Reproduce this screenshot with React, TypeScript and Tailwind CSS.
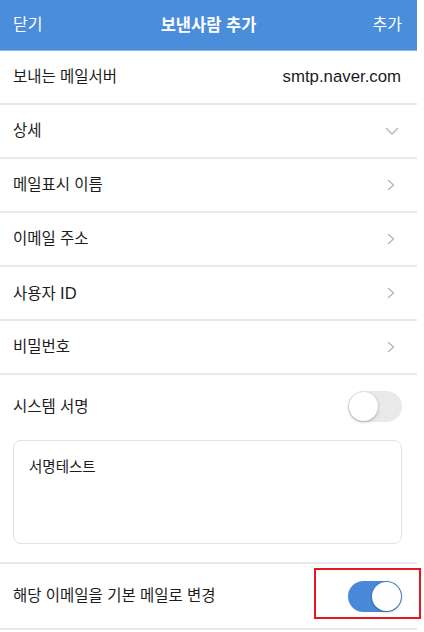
import React from "react";

const font = { fontFamily: '"Liberation Sans", "Noto Sans CJK KR", sans-serif' };

function ChevronRight() {
  return (
    <svg width="8" height="12" viewBox="0 0 8 12" fill="none">
      <path d="M1.5 1.5 L6.5 6 L1.5 10.5" stroke="#b4b4b4" strokeWidth="1.3" strokeLinecap="round" strokeLinejoin="round" />
    </svg>
  );
}

function ChevronDown() {
  return (
    <svg width="14" height="9" viewBox="0 0 14 9" fill="none">
      <path d="M1.5 1.5 L7 7 L12.5 1.5" stroke="#b4b4b4" strokeWidth="1.3" strokeLinecap="round" strokeLinejoin="round" />
    </svg>
  );
}

function Toggle({ on }: { on: boolean }) {
  return (
    <div
      className={
        "w-[54px] h-[31px] rounded-full flex items-center px-[1px] " +
        (on ? "bg-[#4a89d9] justify-end" : "bg-[#e9e9e9] justify-start")
      }
    >
      <div className="w-[29px] h-[29px] rounded-full bg-white shadow-[0_1px_3px_rgba(0,0,0,0.3)]" />
    </div>
  );
}

function Row({ label, right }: { label: React.ReactNode; right?: React.ReactNode }) {
  return (
    <div className="h-[54px] border-b-2 border-[#e8e8e8] flex items-center justify-between pl-[13px] pr-[22px]">
      <span className="text-[15.5px] text-[#1c1c1c]">{label}</span>
      {right}
    </div>
  );
}

export default function App() {
  return (
    <div className="w-[424px] h-[632px] bg-white overflow-hidden relative" style={font}>
      <div className="w-[417px]">
        <div className="h-[51px] bg-[#4a8ddb] border-b border-[#8db8ea] flex items-center justify-between px-[13px] text-white">
          <span className="text-[16px] w-[60px]">닫기</span>
          <span className="text-[16.5px] font-semibold">보낸사람 추가</span>
          <span className="text-[16px] w-[60px] text-right pr-[2px]">추가</span>
        </div>
        <div className="h-[54px] border-b-2 border-[#e8e8e8] flex items-center justify-between pl-[13px] pr-[16px]">
          <span className="text-[15.5px] text-[#1c1c1c]">보내는 메일서버</span>
          <span className="text-[16.8px] text-[#1c1c1c]">smtp.naver.com</span>
        </div>
        <div className="h-[54px] border-b-2 border-[#e8e8e8] flex items-center justify-between pl-[13px] pr-[18px]">
          <span className="text-[15.5px] text-[#1c1c1c]">상세</span>
          <ChevronDown />
        </div>
        <Row label="메일표시 이름" right={<ChevronRight />} />
        <Row label="이메일 주소" right={<ChevronRight />} />
        <Row
          label={
            <>
              사용자 <span className="text-[16.5px]">ID</span>
            </>
          }
          right={<ChevronRight />}
        />
        <Row label="비밀번호" right={<ChevronRight />} />
        <div className="border-b-2 border-[#e8e8e8] pt-[16px] pb-[18px] px-[13px] flex flex-col gap-[18px]">
          <div className="h-[31px] flex items-center justify-between pr-[2px]">
            <span className="text-[15.5px] text-[#1c1c1c]">시스템 서명</span>
            <Toggle on={false} />
          </div>
          <div className="h-[104px] mr-[2px] rounded-[8px] border border-[#e2e2e2] px-[15px] pt-[14px]">
            <span className="text-[14.5px] text-[#1c1c1c]">서명테스트</span>
          </div>
        </div>
        <div className="h-[66px] border-b-2 border-[#e8e8e8] flex items-center justify-between pl-[13px] pr-[15px]">
          <span className="text-[15.5px] text-[#1c1c1c]">해당 이메일을 기본 메일로 변경</span>
          <Toggle on={true} />
        </div>
      </div>
      <div className="absolute left-[314px] top-[568px] w-[107px] h-[51px] border-2 border-[#e3191f]" />
    </div>
  );
}
